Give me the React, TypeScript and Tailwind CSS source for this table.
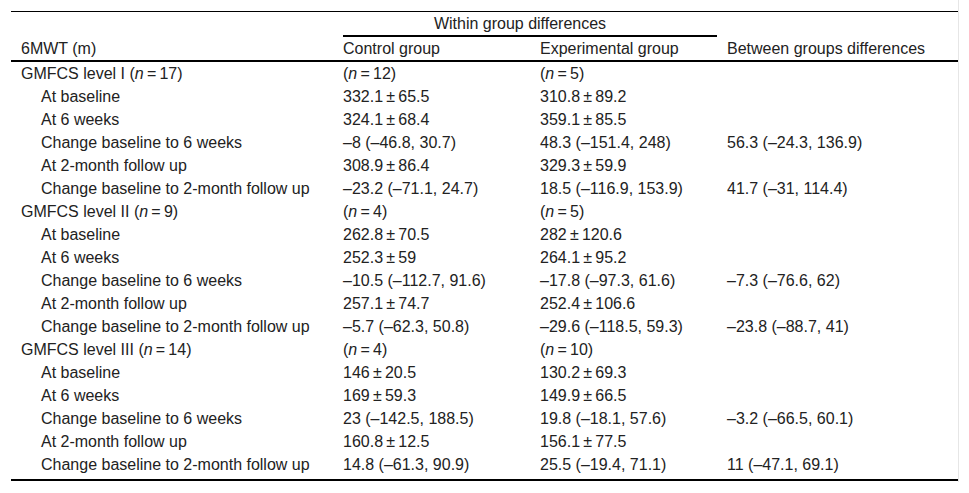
const cols = "grid grid-cols-[322px_197px_187px_241px]";

type Row = { label: React.ReactNode; a: React.ReactNode; b: React.ReactNode; c?: string; group?: boolean };

const N = ({ v }: { v: number }) => (
  <>
    (<i>n</i>{"\u2009=\u2009"}{v})
  </>
);

const pm = (x: string, y: string) => `${x}\u2009±\u2009${y}`;

const block = (level: string, total: number, nc: number, ne: number, d: string[][]): Row[] => [
  {
    label: (
      <>
        GMFCS level {level} <N v={total} />
      </>
    ),
    a: <N v={nc} />,
    b: <N v={ne} />,
    group: true,
  },
  { label: "At baseline", a: pm(d[0][0], d[0][1]), b: pm(d[0][2], d[0][3]) },
  { label: "At 6 weeks", a: pm(d[1][0], d[1][1]), b: pm(d[1][2], d[1][3]) },
  { label: "Change baseline to 6 weeks", a: d[2][0], b: d[2][1], c: d[2][2] },
  { label: "At 2-month follow up", a: pm(d[3][0], d[3][1]), b: pm(d[3][2], d[3][3]) },
  { label: "Change baseline to 2-month follow up", a: d[4][0], b: d[4][1], c: d[4][2] },
];

const rows: Row[] = [
  ...block("I", 17, 12, 5, [
    ["332.1", "65.5", "310.8", "89.2"],
    ["324.1", "68.4", "359.1", "85.5"],
    ["–8 (–46.8, 30.7)", "48.3 (–151.4, 248)", "56.3 (–24.3, 136.9)"],
    ["308.9", "86.4", "329.3", "59.9"],
    ["–23.2 (–71.1, 24.7)", "18.5 (–116.9, 153.9)", "41.7 (–31, 114.4)"],
  ]),
  ...block("II", 9, 4, 5, [
    ["262.8", "70.5", "282", "120.6"],
    ["252.3", "59", "264.1", "95.2"],
    ["–10.5 (–112.7, 91.6)", "–17.8 (–97.3, 61.6)", "–7.3 (–76.6, 62)"],
    ["257.1", "74.7", "252.4", "106.6"],
    ["–5.7 (–62.3, 50.8)", "–29.6 (–118.5, 59.3)", "–23.8 (–88.7, 41)"],
  ]),
  ...block("III", 14, 4, 10, [
    ["146", "20.5", "130.2", "69.3"],
    ["169", "59.3", "149.9", "66.5"],
    ["23 (–142.5, 188.5)", "19.8 (–18.1, 57.6)", "–3.2 (–66.5, 60.1)"],
    ["160.8", "12.5", "156.1", "77.5"],
    ["14.8 (–61.3, 90.9)", "25.5 (–19.4, 71.1)", "11 (–47.1, 69.1)"],
  ]),
];

export default function App() {
  return (
    <div className="w-[959px] h-[482px] bg-white border-r border-[#e6e6e6] pt-[11px] pl-[11px] font-['Liberation_Sans',Arial,sans-serif] text-[16px] text-[#222]">
      <div className="w-[947px] border-t border-black">
        <div className={`${cols} border-b-2 border-black`}>
          <div className="row-span-2 flex items-end pl-[10px] leading-[23px]">6MWT (m)</div>
          <div className="col-span-2 ml-[10px] h-[25px] border-b-2 border-black pr-[20px] text-center leading-[23px]">
            Within group differences
          </div>
          <div className="row-span-2 flex items-end pl-[10px] leading-[23px]">Between groups differences</div>
          <div className="pl-[10px] leading-[23px]">Control group</div>
          <div className="pl-[10px] leading-[23px]">Experimental group</div>
        </div>
        <div className="border-b-2 border-black pb-[3px]">
          {rows.map((r, i) => (
            <div key={i} className={`${cols} h-[23px] leading-[23px] whitespace-nowrap`}>
              <div className={r.group ? "pl-[10px]" : "pl-[30px]"}>{r.label}</div>
              <div className="pl-[10px]">{r.a}</div>
              <div className="pl-[10px]">{r.b}</div>
              <div className="pl-[10px]">{r.c ?? ""}</div>
            </div>
          ))}
        </div>
      </div>
    </div>
  );
}
